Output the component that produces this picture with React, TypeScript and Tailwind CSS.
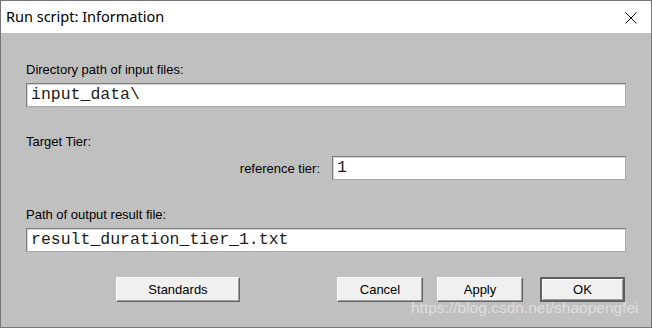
import React from "react";

const sans = { fontFamily: '"Liberation Sans", Arial, sans-serif' };

function Field({ value, className = "" }: { value: string; className?: string }) {
  return (
    <div
      className={`h-[24px] bg-white border border-t-[#7b7b7b] border-l-[#7b7b7b] border-b-[#a8a8a8] border-r-[#a8a8a8] flex items-center pl-[4px] text-[16.5px] leading-[18px] text-[#1c1c1c] shadow-[inset_1px_1px_0_#d6d6d6] ${className}`}
      style={{ fontFamily: '"Liberation Mono", "Courier New", monospace' }}
    >
      {value}
    </div>
  );
}

function Btn({ label, className = "", isDefault = false }: { label: string; className?: string; isDefault?: boolean }) {
  return (
    <div
      className={`h-[25px] flex items-center justify-center bg-[#f0f0f0] text-[13px] text-black ${
        isDefault
          ? "border-2 border-[#5e5e5e] shadow-[inset_1px_1px_0_#ffffff,inset_-1px_-1px_0_#a0a0a0]"
          : "border border-t-white border-l-white border-b-[#646464] border-r-[#646464] shadow-[inset_-1px_-1px_0_#a0a0a0]"
      } ${className}`}
      style={sans}
    >
      {label}
    </div>
  );
}

export default function App() {
  return (
    <div className="relative w-[652px] h-[328px] flex flex-col border border-[#767676] bg-[#c0c0c0] overflow-hidden">
      <div className="h-[32px] bg-white flex items-center justify-between pl-[5px] pr-[14px]">
        <span className="text-[14.5px] text-black" style={{ fontFamily: '"Noto Sans", "Open Sans", sans-serif' }}>
          Run script: Information
        </span>
        <svg width="12" height="12" viewBox="0 0 12 12" className="mt-[1px]">
          <path d="M0.5 0.5 L11.5 11.5 M11.5 0.5 L0.5 11.5" stroke="#111" strokeWidth="1" fill="none" />
        </svg>
      </div>
      <div className="flex flex-col pl-[25px] pt-[29px] text-[13px] leading-[15px] text-black" style={sans}>
        <div>Directory path of input files:</div>
        <Field value="input_data\" className="mt-[6px] w-[600px]" />
        <div className="mt-[27px]">Target Tier:</div>
        <div className="mt-[7px] w-[600px] flex items-center justify-end gap-[12px]">
          <span>reference tier:</span>
          <Field value="1" className="w-[294px]" />
        </div>
        <div className="mt-[27px]">Path of output result file:</div>
        <Field value="result_duration_tier_1.txt" className="mt-[6px] w-[600px]" />
        <div className="mt-[25px] flex">
          <Btn label="Standards" className="ml-[90px] w-[124px]" />
          <Btn label="Cancel" className="ml-[97px] w-[86px]" />
          <Btn label="Apply" className="ml-[14px] w-[86px]" />
          <Btn label="OK" isDefault className="ml-[17px] w-[85px]" />
        </div>
      </div>
      <div
        className="absolute left-[410px] top-[299px] text-[15.5px] leading-[16px] text-white/50 pointer-events-none"
        style={sans}
      >
        https://blog.csdn.net/shaopengfei
      </div>
    </div>
  );
}
